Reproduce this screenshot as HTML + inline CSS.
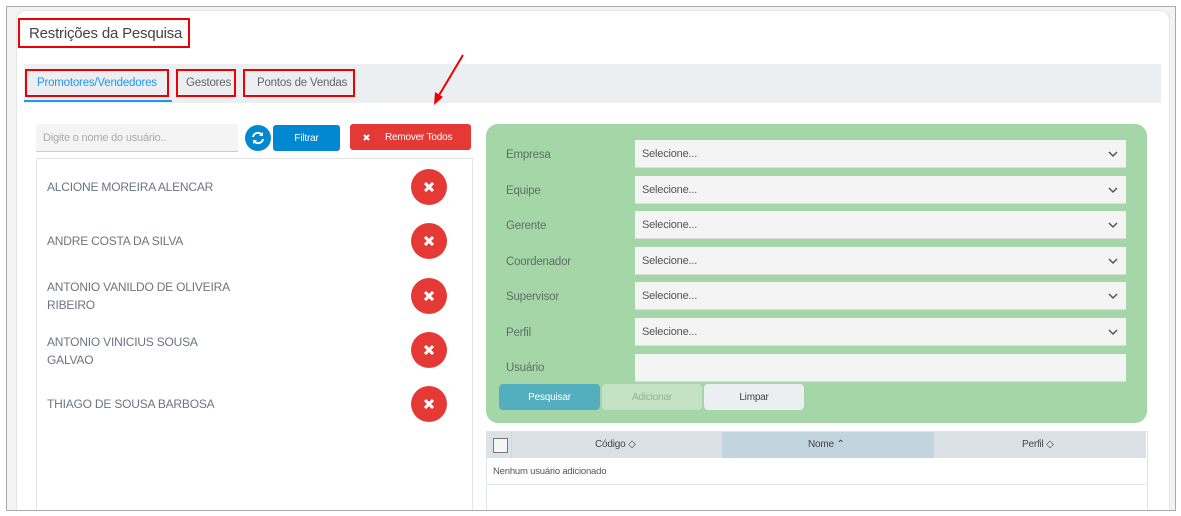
<html><head><style>
body{margin:0;width:1181px;height:516px;background:#fff;font-family:"Liberation Sans",sans-serif;position:relative;overflow:hidden;letter-spacing:-0.2px}
.a{position:absolute}
.red{border:2px solid #e00;position:absolute}
.sel{position:absolute;left:635px;width:491px;height:27px;background:#f4f4f4;border-bottom:1px solid #ddd;font-size:11px;color:#555;line-height:28px;text-indent:7px}
.sel svg{position:absolute;right:8px;top:11px}
.lab{position:absolute;left:506px;font-size:11.5px;color:#5f6f68}
.nm{position:absolute;left:47px;font-size:12px;color:#6b7580;line-height:18px}
.x{position:absolute;left:411px;width:36px;height:36px;border-radius:50%;background:#e53935}
.x svg{position:absolute;left:13px;top:13px}
.btn{line-height:28px!important}
</style></head><body>
<div class="a" style="left:6px;top:6px;width:1168px;height:503px;border:1px solid #aaa;background:#f3f3f3"></div>
<div class="a" style="left:16px;top:10px;width:1152px;height:499px;background:#fff;border-radius:10px 10px 0 0;border:1px solid #e4e4e4;border-bottom:none"></div>
<div class="a" style="left:29px;top:25px;font-size:15px;color:#444">Restrições da Pesquisa</div>
<div class="red" style="left:18px;top:18px;width:168px;height:26px"></div>
<div class="a" style="left:24px;top:64px;width:1137px;height:39px;background:#eceff1"></div>
<div class="a" style="left:24px;top:100px;width:148px;height:2px;background:#2196f3"></div>
<div class="a" style="left:37px;top:77px;font-size:11.5px;color:#2196f3">Promotores/Vendedores</div>
<div class="a" style="left:186px;top:77px;font-size:11.5px;color:#666">Gestores</div>
<div class="a" style="left:257px;top:77px;font-size:11.5px;color:#666">Pontos de Vendas</div>
<div class="red" style="left:25px;top:69px;width:140px;height:24px"></div>
<div class="red" style="left:176px;top:69px;width:56px;height:24px"></div>
<div class="red" style="left:243px;top:69px;width:108px;height:24px"></div>
<svg class="a" style="left:430px;top:52px" width="36" height="56"><line x1="33" y1="3" x2="8" y2="45" stroke="#e00" stroke-width="2"/><polygon points="4,53 5,40 13,45" fill="#e00"/></svg>
<div class="a" style="left:36px;top:124px;width:202px;height:27px;background:#f4f4f4;border-bottom:1px solid #ccc;font-size:11px;color:#aaa;line-height:28px;text-indent:7px">Digite o nome do usuário..</div>
<div class="a" style="left:245px;top:125px;width:26px;height:26px;border-radius:50%;background:#0288d1"><svg width="26" height="26"><path d="M8 12a5 5 0 0 1 9-2M18 14a5 5 0 0 1-9 2" stroke="#fff" stroke-width="2" fill="none"/><path d="M18 7v4h-4zM8 19v-4h4z" fill="#fff"/></svg></div>
<div class="a btn" style="left:273px;top:125px;width:67px;height:26px;border-radius:3px;background:#0288d1;color:#fff;text-align:center;font-size:10px">Filtrar</div>
<div class="a btn" style="left:350px;top:124px;width:121px;height:26px;border-radius:3px;background:#e53935;color:#fff;font-size:10px"><svg style="position:absolute;left:13px;top:10px" width="7" height="7"><path d="M1 1l5 5M6 1l-5 5" stroke="#fff" stroke-width="2"/></svg><span style="margin-left:35px">Remover Todos</span></div>
<div class="a" style="left:36px;top:158px;width:435px;height:351px;border:1px solid #e4e4e4;border-bottom:none"></div>
<div class="nm" style="top:178px">ALCIONE MOREIRA ALENCAR</div><div class="x" style="top:169px"><svg width="10" height="10"><path d="M1 1l8 8M9 1l-8 8" stroke="#fff" stroke-width="3"/></svg></div>
<div class="nm" style="top:232px">ANDRE COSTA DA SILVA</div><div class="x" style="top:223px"><svg width="10" height="10"><path d="M1 1l8 8M9 1l-8 8" stroke="#fff" stroke-width="3"/></svg></div>
<div class="nm" style="top:278px">ANTONIO VANILDO DE OLIVEIRA<br>RIBEIRO</div><div class="x" style="top:278px"><svg width="10" height="10"><path d="M1 1l8 8M9 1l-8 8" stroke="#fff" stroke-width="3"/></svg></div>
<div class="nm" style="top:333px">ANTONIO VINICIUS SOUSA<br>GALVAO</div><div class="x" style="top:332px"><svg width="10" height="10"><path d="M1 1l8 8M9 1l-8 8" stroke="#fff" stroke-width="3"/></svg></div>
<div class="nm" style="top:395px">THIAGO DE SOUSA BARBOSA</div><div class="x" style="top:386px"><svg width="10" height="10"><path d="M1 1l8 8M9 1l-8 8" stroke="#fff" stroke-width="3"/></svg></div>
<div class="a" style="left:486px;top:124px;width:661px;height:299px;background:#a5d6a7;border-radius:12px"></div>
<div class="lab" style="top:149px">Empresa</div><div class="sel" style="top:140px">Selecione...<svg width="10" height="7"><path d="M1 1l4 4 4-4" stroke="#555" stroke-width="1.5" fill="none"/></svg></div>
<div class="lab" style="top:185px">Equipe</div><div class="sel" style="top:176px">Selecione...<svg width="10" height="7"><path d="M1 1l4 4 4-4" stroke="#555" stroke-width="1.5" fill="none"/></svg></div>
<div class="lab" style="top:220px">Gerente</div><div class="sel" style="top:211px">Selecione...<svg width="10" height="7"><path d="M1 1l4 4 4-4" stroke="#555" stroke-width="1.5" fill="none"/></svg></div>
<div class="lab" style="top:256px">Coordenador</div><div class="sel" style="top:247px">Selecione...<svg width="10" height="7"><path d="M1 1l4 4 4-4" stroke="#555" stroke-width="1.5" fill="none"/></svg></div>
<div class="lab" style="top:291px">Supervisor</div><div class="sel" style="top:282px">Selecione...<svg width="10" height="7"><path d="M1 1l4 4 4-4" stroke="#555" stroke-width="1.5" fill="none"/></svg></div>
<div class="lab" style="top:327px">Perfil</div><div class="sel" style="top:318px">Selecione...<svg width="10" height="7"><path d="M1 1l4 4 4-4" stroke="#555" stroke-width="1.5" fill="none"/></svg></div>
<div class="lab" style="top:362px">Usuário</div><div class="sel" style="top:354px"></div>
<div class="a btn" style="left:499px;top:384px;width:101px;height:26px;border-radius:4px;background:#53aebe;color:#fff;text-align:center;font-size:10px">Pesquisar</div>
<div class="a btn" style="left:602px;top:384px;width:100px;height:26px;border-radius:4px;background:#c4e3c5;color:#8fb592;text-align:center;font-size:10px">Adicionar</div>
<div class="a btn" style="left:704px;top:384px;width:100px;height:26px;border-radius:4px;background:#eceff1;color:#444;text-align:center;font-size:10px">Limpar</div>
<div class="a" style="left:486px;top:431px;width:660px;height:78px;border:1px solid #e0e4e8;border-bottom:none"></div>
<div class="a" style="left:487px;top:432px;width:659px;height:26px;background:#dae2e8"></div>
<div class="a" style="left:722px;top:432px;width:212px;height:26px;background:#c2d4dd"></div>
<div class="a" style="left:493px;top:438px;width:13px;height:13px;border:1px solid #777;background:#f5f5f5"></div>
<div class="a" style="left:511px;top:432px;width:1px;height:26px;background:#cfd8dc"></div>
<div class="a" style="left:595px;top:439px;font-size:10px;color:#444">Código ◇</div>
<div class="a" style="left:808px;top:439px;font-size:10px;color:#444">Nome ⌃</div>
<div class="a" style="left:1022px;top:439px;font-size:10px;color:#444">Perfil ◇</div>
<div class="a" style="left:487px;top:484px;width:659px;height:1px;background:#e0e4e8"></div>
<div class="a" style="left:493px;top:466px;font-size:9.5px;color:#555">Nenhum usuário adicionado</div>
</body></html>
